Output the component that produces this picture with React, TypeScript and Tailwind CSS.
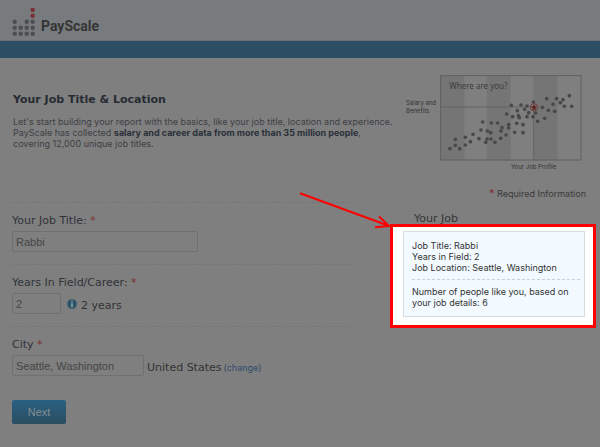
import type { ReactNode } from "react";

const logoDots = [
  [2, 13], [2, 19], [2, 25],
  [8, 19], [8, 25],
  [14, 13], [14, 19], [14, 25],
  [20, 13], [20, 19], [20, 25],
];

// Plot area is 423 x 255 units, drawn at a third of that size.
const people = [
  [29, 220], [45, 192], [45, 210], [58, 220], [75, 186], [75, 209], [90, 199],
  [98, 177], [116, 190], [122, 164], [127, 140], [136, 201], [140, 191],
  [141, 167], [151, 172], [152, 191], [153, 143], [164, 201], [172, 143],
  [181, 189], [182, 167], [185, 157], [197, 179], [205, 148], [205, 158],
  [199, 116], [213, 90], [217, 124], [223, 171], [229, 144], [231, 106],
  [234, 121], [237, 127], [242, 89], [248, 148], [248, 172], [253, 102],
  [260, 92], [260, 124], [265, 112], [278, 124], [279, 80], [286, 113],
  [292, 138], [306, 96], [313, 129], [319, 70], [324, 105], [338, 87],
  [343, 108], [349, 70], [360, 82], [368, 73], [372, 93], [387, 61], [394, 93],
];

function Logo() {
  return (
    <a href="#home" className="flex items-start gap-1.5">
      <svg width="23" height="28" viewBox="0 0 23 28" aria-hidden="true">
        {logoDots.map(([x, y]) => (
          <circle key={`${x}-${y}`} cx={x + 0.7} cy={y + 0.7} r="2.2" fill="#4c4e50" />
        ))}
        <circle cx="20.7" cy="1.9" r="2.2" fill="#7c3036" />
        <circle cx="20.7" cy="7.7" r="2.2" fill="#7c3036" />
      </svg>
      <span className="mt-2.5 font-['Roboto','Liberation_Sans',sans-serif] text-[14px] leading-4 font-bold text-[#353535]">
        PayScale
      </span>
    </a>
  );
}

function ProfileChart() {
  return (
    <figure className="flex gap-1 text-[6px] leading-2 text-[#333]">
      <p className="w-[30px] pt-6 whitespace-nowrap">
        Salary and
        <br />
        Benefits
      </p>
      <div>
        <svg width="142" height="86" viewBox="-1 -1 426 258" role="img" aria-label="Where are you?">
          <rect width="72" height="255" fill="#757575" />
          <rect x="139" width="72" height="255" fill="#757575" />
          <rect x="280" width="72" height="255" fill="#757575" />
          <rect x="1" y="1" width="421" height="253" fill="none" stroke="#606060" strokeWidth="3" />
          <path d="M0 95H280V255" fill="none" stroke="#656565" strokeWidth="3" />
          {people.map(([x, y]) => (
            <circle key={`${x}-${y}`} cx={x} cy={y} r="5.5" fill="#484848" />
          ))}
          <circle cx="281" cy="96" r="11" fill="none" stroke="#74342f" strokeWidth="2.5" />
          <path
            d="M281 87l2.5 6 6.5.5-5 4.5 2 6.5-6-3.5-6 3.5 2-6.5-5-4.5 6.5-.5z"
            fill="#5e211d"
          />
          <text
            x="27"
            y="40"
            fontSize="24"
            fill="#3c3c3c"
            className="font-['Noto_Sans','DejaVu_Sans',sans-serif]"
          >
            Where are you?
          </text>
        </svg>
        <figcaption className="mt-0.5 pl-[71px]">Your Job Profile</figcaption>
      </div>
    </figure>
  );
}

function Required() {
  return <span className="text-[#7d3033]">*</span>;
}

function Field({ id, label, children }: { id: string; label: string; children: ReactNode }) {
  return (
    <div className="h-[62px] border-t border-dashed border-[#757575] pt-2.5">
      <label
        htmlFor={id}
        className="block font-['DejaVu_Sans',Verdana,sans-serif] text-[11px] leading-4 text-[#303338]"
      >
        {label} <Required />
      </label>
      <div className="mt-0.5 flex items-center">{children}</div>
    </div>
  );
}

const inputClass =
  "h-[21px] rounded-[2px] border border-[#707070] px-[3px] font-['Liberation_Sans',Arial,sans-serif] text-[11px] text-[#454545]";

const noteClass = "pt-1 font-['DejaVu_Sans',Verdana,sans-serif] text-[11px] leading-4";

function InfoIcon() {
  return (
    <svg className="ml-1.5" width="10" height="10" viewBox="0 0 10 10" aria-hidden="true">
      <circle cx="5" cy="5" r="4.8" fill="#2b536b" />
      <path d="M5 4v4.2M5 1.8v1.4" fill="none" stroke="#8b9499" strokeWidth="1.8" />
    </svg>
  );
}

function JobSummary() {
  return (
    <div className="border-[3px] border-[#fe0000] bg-white pt-1 pr-2 pb-2 pl-2.5">
      <div className="border border-[#d5dfe0] bg-[#f2faff] pt-2 pr-1 pb-2 pl-2 text-[9px] leading-[11px] text-[#333]">
        <p>Job Title: Rabbi</p>
        <p>Years in Field: 2</p>
        <p>Job Location: Seattle, Washington</p>
        <p className="mt-1.5 border-t border-dashed border-[#c8d2d6] pt-1.5">
          Number of people like you, based on
          <br />
          your job details: 6
        </p>
      </div>
    </div>
  );
}

export default function App() {
  return (
    <div className="relative min-h-screen bg-[#7f7f7f] font-['Inter','DejaVu_Sans',sans-serif] text-[#333]">
      <header className="border-b border-[#6c7072] bg-[#777b7e] px-3 pt-2 pb-1">
        <Logo />
      </header>
      <div className="h-[17px] bg-[#2d4e62]" />

      <main className="pr-1 pb-5 pl-3">
        <div className="flex justify-between pt-[17px] pr-[14px]">
          <div className="pt-[17px] pl-px">
            <h1 className="font-['DejaVu_Sans',Verdana,sans-serif] text-[11px] leading-4 font-bold text-[#262b33]">
              Your Job Title &amp; Location
            </h1>
            <p className="mt-2 text-[9px] leading-[11px] whitespace-nowrap text-[#3d4045]">
              Let's start building your report with the basics, like your job title, location and experience.
              <br />
              PayScale has collected{" "}
              <b className="text-[#2a3039]">salary and career data from more than 35 million people</b>,
              <br />
              covering 12,000 unique job titles.
            </p>
          </div>
          <ProfileChart />
        </div>

        <p className="mt-3.5 pr-2.5 text-right text-[9px] leading-4 text-[#3a3a3a]">
          <span className="text-[11px]">
            <Required />
          </span>{" "}
          Required Information
        </p>

        <div className="flex">
          <form className="min-w-0 flex-1 pr-10">
            <Field id="title" label="Your Job Title:">
              <input id="title" defaultValue="Rabbi" className={`${inputClass} w-[186px]`} />
            </Field>
            <Field id="years" label="Years In Field/Career:">
              <input id="years" defaultValue="2" className={`${inputClass} w-[49px]`} />
              <InfoIcon />
              <span className={`${noteClass} ml-1`}>2 years</span>
            </Field>
            <Field id="city" label="City">
              <input id="city" defaultValue="Seattle, Washington" className={`${inputClass} w-[132px]`} />
              <span className={`${noteClass} ml-[3px]`}>United States</span>
              <a href="#change" className="ml-[2px] pt-1 text-[9px] leading-4 text-[#2d4c6b]">
                (change)
              </a>
            </Field>
            <button
              type="button"
              className="mt-3 h-6 w-[54px] rounded-[2px] bg-linear-to-b from-[#286282] to-[#2b4d60] font-['Liberation_Sans',Arial,sans-serif] text-[11px] text-[#868f94]"
            >
              Next
            </button>
          </form>

          <aside className="w-[206px] pt-[11px]">
            <h2 className="pl-6 font-['DejaVu_Sans',Verdana,sans-serif] text-[11px] leading-[11px] text-[#353535]">
              Your Job
            </h2>
            <JobSummary />
          </aside>
        </div>
      </main>

      {/* callout arrow pointing at the summary box */}
      <svg
        className="pointer-events-none absolute top-[188px] left-[298px]"
        width="94"
        height="42"
        viewBox="0 0 94 42"
        fill="none"
        stroke="#fe0000"
        strokeWidth="2"
        aria-hidden="true"
      >
        <path d="M2 5.3L90 37.5M81 28.5L91 38L77 39.3" />
      </svg>
    </div>
  );
}
